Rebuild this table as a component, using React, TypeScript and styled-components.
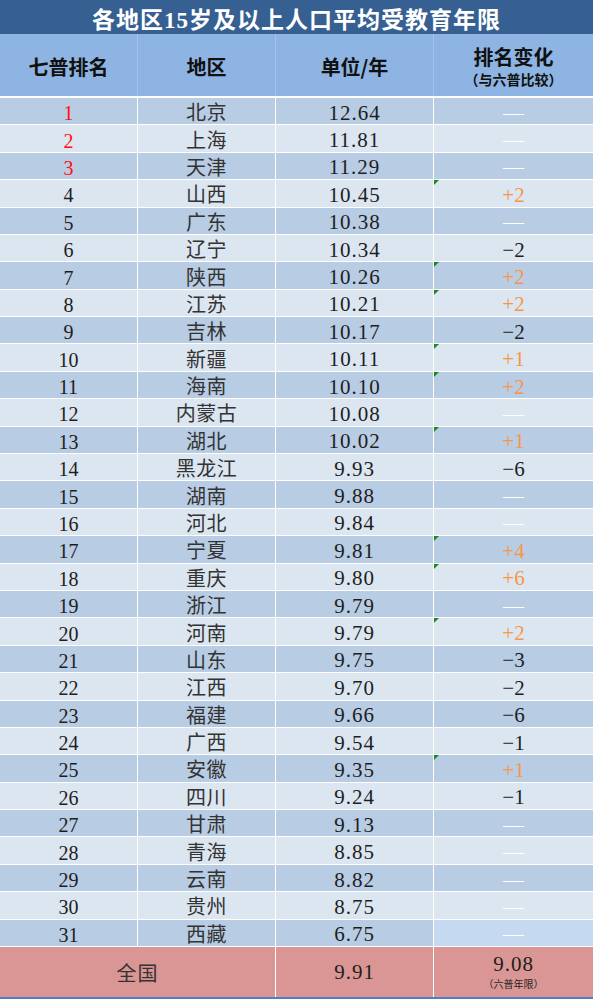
import React from "react";
import styled, { createGlobalStyle } from "styled-components";

const GlobalStyle = createGlobalStyle`
  html, body { margin: 0; padding: 0; background: #ffffff; }
  body { font-family: "Liberation Serif", "Noto Sans CJK SC", serif; }
`;

type Row = { rank: number; region: string; years: string; change: string };

const rows: Row[] = [
  { rank: 1, region: "北京", years: "12.64", change: "—" },
  { rank: 2, region: "上海", years: "11.81", change: "—" },
  { rank: 3, region: "天津", years: "11.29", change: "—" },
  { rank: 4, region: "山西", years: "10.45", change: "+2" },
  { rank: 5, region: "广东", years: "10.38", change: "—" },
  { rank: 6, region: "辽宁", years: "10.34", change: "−2" },
  { rank: 7, region: "陕西", years: "10.26", change: "+2" },
  { rank: 8, region: "江苏", years: "10.21", change: "+2" },
  { rank: 9, region: "吉林", years: "10.17", change: "−2" },
  { rank: 10, region: "新疆", years: "10.11", change: "+1" },
  { rank: 11, region: "海南", years: "10.10", change: "+2" },
  { rank: 12, region: "内蒙古", years: "10.08", change: "—" },
  { rank: 13, region: "湖北", years: "10.02", change: "+1" },
  { rank: 14, region: "黑龙江", years: "9.93", change: "−6" },
  { rank: 15, region: "湖南", years: "9.88", change: "—" },
  { rank: 16, region: "河北", years: "9.84", change: "—" },
  { rank: 17, region: "宁夏", years: "9.81", change: "+4" },
  { rank: 18, region: "重庆", years: "9.80", change: "+6" },
  { rank: 19, region: "浙江", years: "9.79", change: "—" },
  { rank: 20, region: "河南", years: "9.79", change: "+2" },
  { rank: 21, region: "山东", years: "9.75", change: "−3" },
  { rank: 22, region: "江西", years: "9.70", change: "−2" },
  { rank: 23, region: "福建", years: "9.66", change: "−6" },
  { rank: 24, region: "广西", years: "9.54", change: "−1" },
  { rank: 25, region: "安徽", years: "9.35", change: "+1" },
  { rank: 26, region: "四川", years: "9.24", change: "−1" },
  { rank: 27, region: "甘肃", years: "9.13", change: "—" },
  { rank: 28, region: "青海", years: "8.85", change: "—" },
  { rank: 29, region: "云南", years: "8.82", change: "—" },
  { rank: 30, region: "贵州", years: "8.75", change: "—" },
  { rank: 31, region: "西藏", years: "6.75", change: "—" },
];

const Table = styled.div`
  width: 593px;
  display: flex;
  flex-direction: column;
  background: #ffffff;
`;

const Title = styled.div`
  height: 34px;
  background: #376092;
  color: #ffffff;
  font-weight: 700;
  font-size: 23px;
  letter-spacing: 1px;
  display: flex;
  align-items: center;
  justify-content: center;
  padding-top: 1px;
  box-sizing: border-box;
`;

const Header = styled.div`
  height: 62px;
  display: grid;
  grid-template-columns: 137px 137px 157px 1fr;
  column-gap: 1px;
  background: #a3c3e8;
  margin-bottom: 2px;
`;

const HeadCell = styled.div`
  background: #8db4e2;
  display: flex;
  flex-direction: column;
  align-items: center;
  justify-content: center;
  font-family: "Noto Sans CJK SC", sans-serif;
  font-weight: 700;
  font-size: 20px;
  color: #111111;
  line-height: 24px;
  padding-top: 3px;
  box-sizing: border-box;
`;

const HeadSub = styled.span`
  font-size: 14px;
  line-height: 18px;
  margin-top: 1px;
`;

const Body = styled.div`
  height: 848px;
  display: grid;
  grid-template-rows: repeat(31, 1fr);
  row-gap: 1px;
  margin-bottom: 1px;
`;

const DataRow = styled.div`
  display: grid;
  grid-template-columns: 137px 137px 157px 1fr;
  column-gap: 1px;
  background: #ffffff;
`;

const Cell = styled.div<{ $bg: string }>`
  position: relative;
  background: ${(p) => p.$bg};
  display: flex;
  align-items: center;
  justify-content: center;
  font-size: 20px;
  color: #1e1e1e;
  line-height: 1;
  padding-top: 4px;
  box-sizing: border-box;
`;

const Rank = styled.span<{ $top: boolean }>`
  color: ${(p) => (p.$top ? "#ff1010" : "#1e1e1e")};
`;

const Region = styled.span`
  font-family: "Noto Sans CJK SC", sans-serif;
  font-size: 20px;
  color: #333333;
  letter-spacing: 0.5px;
  margin-top: -2px;
`;

const Years = styled.span`
  font-size: 21px;
  letter-spacing: 1px;
`;

const Change = styled.span<{ $kind: "up" | "down" | "none" }>`
  font-size: 21px;
  color: ${(p) =>
    p.$kind === "up" ? "#f79646" : p.$kind === "down" ? "#1e1e1e" : "#ffffff"};
`;

const Flag = styled.span`
  position: absolute;
  left: 0;
  top: 0;
  width: 0;
  height: 0;
  border-top: 5px solid #1a8a1a;
  border-right: 5px solid transparent;
`;

const TotalRow = styled.div`
  height: 50px;
  display: grid;
  grid-template-columns: 275px 157px 1fr;
  column-gap: 1px;
  background: #ffffff;
  border-bottom: 2px solid #4f81bd;
`;

const TotalCell = styled.div`
  background: #da9694;
  display: flex;
  flex-direction: column;
  align-items: center;
  justify-content: center;
  font-size: 21px;
  color: #1e1e1e;
`;

const TotalLabel = styled.span`
  font-family: "Noto Sans CJK SC", sans-serif;
  font-size: 20px;
  color: #333333;
  letter-spacing: 1px;
`;

const TotalNum = styled.span`
  font-size: 21px;
  letter-spacing: 1px;
  line-height: 22px;
`;

const TotalSub = styled.span`
  font-family: "Noto Sans CJK SC", sans-serif;
  font-size: 10px;
  line-height: 14px;
  margin-top: 2px;
  color: #222222;
`;

const DARK = "#b8cce4";
const LIGHT = "#dce6f1";

export default function App() {
  return (
    <>
      <GlobalStyle />
      <Table>
        <Title>各地区15岁及以上人口平均受教育年限</Title>
        <Header>
          <HeadCell>七普排名</HeadCell>
          <HeadCell>地区</HeadCell>
          <HeadCell>单位/年</HeadCell>
          <HeadCell>
            排名变化
            <HeadSub>（与六普比较）</HeadSub>
          </HeadCell>
        </Header>
        <Body>
          {rows.map((r, i) => {
            const bg = i % 2 === 0 ? DARK : LIGHT;
            const kind = r.change.startsWith("+")
              ? "up"
              : r.change.startsWith("−")
              ? "down"
              : "none";
            const lastBg = r.rank === 31 ? "#c5d9f1" : bg;
            return (
              <DataRow key={r.rank}>
                <Cell $bg={bg}>
                  <Rank $top={r.rank <= 3}>{r.rank}</Rank>
                </Cell>
                <Cell $bg={bg}>
                  <Region>{r.region}</Region>
                </Cell>
                <Cell $bg={bg}>
                  <Years>{r.years}</Years>
                </Cell>
                <Cell $bg={lastBg}>
                  {kind === "up" && <Flag />}
                  <Change $kind={kind}>{r.change}</Change>
                </Cell>
              </DataRow>
            );
          })}
        </Body>
        <TotalRow>
          <TotalCell>
            <TotalLabel>全国</TotalLabel>
          </TotalCell>
          <TotalCell>
            <TotalNum>9.91</TotalNum>
          </TotalCell>
          <TotalCell>
            <TotalNum>9.08</TotalNum>
            <TotalSub>（六普年限）</TotalSub>
          </TotalCell>
        </TotalRow>
      </Table>
    </>
  );
}
